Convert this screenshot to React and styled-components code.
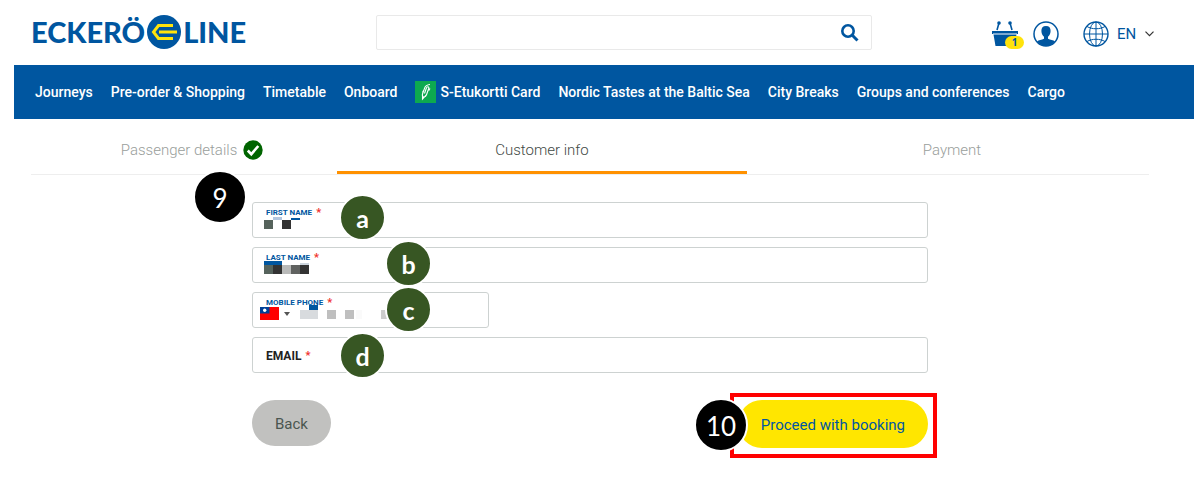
import React from "react";
import styled, { createGlobalStyle, css } from "styled-components";

const blue = "#0056a0";
const ui = `Roboto, sans-serif`;

const GlobalStyle = createGlobalStyle`
  * { box-sizing: border-box; }
  body { margin: 0; background: #fff; font-family: ${ui}; }
  button, input, select { font: inherit; }
`;

const Header = styled.header`
  display: flex;
  align-items: flex-start;
  padding: 15px 46px 15px 31px;
`;

const Logo = styled.a`
  flex: 0 0 345px;
  display: flex;
  align-items: center;
  gap: 2px;
  color: ${blue};
  font: 900 29px/34px Lato, sans-serif;
  text-decoration: none;
`;

const Search = styled.form`
  flex: 1;
  display: flex;
  align-items: center;
  height: 35px;
  padding-right: 12px;
  border: 1px solid #e9e9e9;
  border-radius: 2px;
`;

const SearchInput = styled.input`
  flex: 1;
  min-width: 0;
  height: 100%;
  border: 0;
  outline: 0;
  background: none;
`;

const IconButton = styled.button`
  position: relative;
  display: flex;
  padding: 0;
  border: 0;
  background: none;
  color: ${blue};
`;

const Tools = styled.div`
  flex: 0 0 282px;
  display: flex;
  align-items: center;
  justify-content: flex-end;
  gap: 9px;
  padding-top: 5px;
  color: ${blue};
`;

const Count = styled.span`
  position: absolute;
  left: 14px;
  bottom: -2px;
  width: 19px;
  border-radius: 7px;
  background: #ffe30b;
  color: ${blue};
  font: 700 10px/13px "Noto Sans", sans-serif;
  text-align: center;
`;

const Language = styled.label`
  display: flex;
  align-items: center;
  gap: 8px;
  margin-left: 15px;
`;

const LanguageSelect = styled.select`
  appearance: none;
  width: 20px;
  padding: 0;
  border: 0;
  background: none;
  color: ${blue};
  font-size: 15px;
  line-height: 28px;
`;

const Nav = styled.nav`
  display: flex;
  align-items: center;
  gap: 18px;
  min-height: 54px;
  margin: 0 6px 0 14px;
  padding: 0 21px;
  background: ${blue};
`;

const NavLink = styled.a`
  display: flex;
  align-items: center;
  gap: 4px;
  color: #fff;
  font-size: 14px;
  font-weight: 500;
  line-height: 22px;
  white-space: nowrap;
  text-decoration: none;
`;

const Main = styled.main`
  margin: 0 51px 0 31px;
`;

const Steps = styled.ol`
  display: grid;
  grid-template-columns: 306fr 410fr 402fr;
  margin: 0;
  padding: 0;
  list-style: none;
  border-bottom: 1px solid #eee;
`;

const Step = styled.li`
  display: flex;
  align-items: center;
  justify-content: center;
  gap: 6px;
  height: 55px;
  padding: 10px 0 0 ${(p) => p.$inset || 0}px;
  border-bottom: 3px solid ${(p) => (p.$current ? "#ff9100" : "transparent")};
  color: ${(p) => (p.$current ? "#3f4a45" : "#999e9b")};
  font-size: 15px;
  font-weight: 300;
  line-height: 24px;
`;

const Form = styled.form`
  position: relative;
  max-width: 676px;
  margin: 27px auto 0;
  padding-bottom: 43px;
`;

const Fields = styled.div`
  display: grid;
  gap: 9px;
`;

const Field = styled.div`
  position: relative;
  height: 36px;
  width: ${(p) => (p.$short ? "237px" : "100%")};
`;

const FieldInput = styled.input`
  width: 100%;
  height: 100%;
  padding: 12px 13px 0;
  border: 1px solid #cdd2d1;
  border-radius: 3px;
  outline: 0;
`;

const FieldLabel = styled.label`
  position: absolute;
  left: 14px;
  display: flex;
  gap: 4px;
  font-family: Roboto, sans-serif;
  font-weight: 700;
  ${(p) =>
    p.$large
      ? css`top: 10px; color: #222; font-size: 12px; line-height: 18px;`
      : css`top: 4px; color: ${blue}; font-size: 8px; line-height: 13px;`}
`;

const Required = styled.span`
  color: #f0312b;
  font-size: 11px;
`;

const Redaction = styled.svg`
  position: absolute;
  left: 12px;
  top: 13px;
`;

const Country = styled.button`
  position: absolute;
  left: 8px;
  top: 15px;
  display: flex;
  align-items: center;
  gap: 5px;
  padding: 0;
  border: 0;
  background: none;
`;

const Actions = styled.div`
  display: flex;
  justify-content: space-between;
  align-items: flex-start;
  margin-top: 27px;
`;

const Pill = styled.button`
  height: ${(p) => (p.$primary ? 48 : 46)}px;
  padding: 2px 23px 0;
  border: 0;
  border-radius: 24px;
  background: ${(p) => (p.$primary ? "#ffe600" : "#c1c1bf")};
  color: ${(p) => (p.$primary ? blue : "#4a5650")};
  font-size: 15px;
`;

const Highlight = styled.div`
  margin: -7px -9px -10px 0;
  padding: 3px 5px 6px 4px;
  border: 4px solid #f00;
`;

const Callout = styled.span`
  position: absolute;
  left: ${(p) => p.$x}px;
  top: ${(p) => p.$y}px;
  width: ${(p) => (p.$step ? 54 : 47)}px;
  height: ${(p) => (p.$step ? 54 : 47)}px;
  border: 2px solid #fff;
  border-radius: 50%;
  background: ${(p) => (p.$step ? "#000" : "#375623")};
  color: #fff;
  font: ${(p) => (p.$step ? "400 26px/52px" : "700 25px/44px")} Lato, sans-serif;
  text-align: center;
`;

const links = [
  "Journeys",
  "Pre-order & Shopping",
  "Timetable",
  "Onboard",
  "S-Etukortti Card",
  "Nordic Tastes at the Baltic Sea",
  "City Breaks",
  "Groups and conferences",
  "Cargo",
];

const Emblem = () => (
  <svg width="34" height="34" viewBox="0 0 34 34" aria-hidden="true">
    <circle cx="17" cy="17" r="17" fill={blue} />
    <path d="M26 10.500H11.500L6.500 17l5 6.500H26" fill="none" stroke="#ffe30b" strokeWidth="3" />
    <path d="M12 17h18" stroke="#ffe30b" strokeWidth="3" />
  </svg>
);

const SearchIcon = () => (
  <svg width="18" height="18" viewBox="0 0 18 18" fill="none" stroke={blue} aria-hidden="true">
    <circle cx="7" cy="7" r="5.700" strokeWidth="2.600" />
    <path d="M11.300 11.300l5.200 5.200" strokeWidth="3" />
  </svg>
);

const BasketIcon = () => (
  <svg width="33" height="26" viewBox="0 0 33 26" aria-hidden="true">
    <path d="M1 10h26v3H1zM2.500 13.500h23l-2 11.500H4.500z" fill={blue} />
    <path d="M2 12.500h24" stroke="#7ba7d0" />
    <path d="M6 9l2-7M21 9l-2-7" stroke={blue} strokeWidth="1.600" />
    <circle cx="8" cy="2" r="1.800" fill={blue} />
    <circle cx="19" cy="2" r="1.800" fill={blue} />
  </svg>
);

const ProfileIcon = () => (
  <svg width="26" height="26" viewBox="0 0 26 26" aria-hidden="true">
    <circle cx="13" cy="13" r="12" fill="#fff" stroke={blue} strokeWidth="1.500" />
    <path
      d="M13 5c-3.200 0-4.700 2-4.600 4.900.1 2.800 1.200 4.700 2.600 5.900v2c-2.200 1.300-5.400 1.300-7 2.700C6.200 23.400 9.300 25 13 25s6.800-1.600 9-4.500c-1.600-1.400-4.800-1.400-7-2.700v-2c1.400-1.200 2.500-3.100 2.600-5.900C17.700 7 16.200 5 13 5z"
      fill={blue}
    />
  </svg>
);

const GlobeIcon = () => (
  <svg width="26" height="26" viewBox="0 0 26 26" fill="none" stroke={blue} aria-hidden="true">
    <circle cx="13" cy="13" r="12" strokeWidth="1.400" />
    <ellipse cx="13" cy="13" rx="6.500" ry="12" />
    <path d="M13 1v24M1 13h24M4 5.500c5 3 13 3 18 0M4 20.500c5-3 13-3 18 0" />
  </svg>
);

const CardIcon = () => (
  <svg width="21" height="22" viewBox="0 0 21 22" fill="none" aria-hidden="true">
    <path d="M0 0h21v22H0z" fill="#0da94f" />
    <path
      d="M15 3.500c-3.200.3-4.700 1.500-5.300 3.300L7.500 13c-.6 2 .3 3.200 1.700 3 1.300-.2 1.900-1.200 2.300-2.300l2.200-6.200c.3-.9 0-1.700-.8-1.700-.9 0-1.300.6-1.600 1.400L9.500 12.500M7.500 13v5l4-4.300M13.800 9.500l1.200-2M8.500 9.500l-1 2"
      stroke="#fff"
      strokeWidth="1.100"
    />
  </svg>
);

const CheckIcon = () => (
  <svg width="20" height="20" viewBox="0 0 20 20" fill="none" aria-hidden="true">
    <circle cx="10" cy="10" r="9.700" fill="#006400" />
    <path d="M4.800 10.500l3.500 3.700 7-8.200" stroke="#fff" strokeWidth="2.600" />
  </svg>
);

const Flag = () => (
  <svg width="19" height="13" viewBox="0 0 19 13" aria-hidden="true">
    <path d="M0 0h19v13H0z" fill="#f00" />
    <path d="M0 0h9.500v6.500H0z" fill="#004098" />
    <circle cx="4.700" cy="3.200" r="1.700" fill="#fff" />
  </svg>
);

const Blocks = ({ cells }) => (
  <Redaction width="130" height="16" viewBox="0 0 130 16" aria-hidden="true">
    {cells.map(([x, y, w, h, fill]) => (
      <rect key={`${x}-${y}`} x={x} y={y} width={w} height={h} fill={fill} />
    ))}
  </Redaction>
);

const firstName = [
  [9, 2, 9, 3, "#b3c7df"],
  [27, 3, 9, 2, "#0056a0"],
  [0, 5, 9, 9, "#56635c"],
  [18, 5, 9, 9, "#333"],
];
const lastName = [
  [0, 1, 18, 4, "#0056a0"],
  [36, 3, 9, 2, "#ccd5de"],
  [0, 5, 9, 9, "#56635c"],
  [9, 5, 9, 9, "#333"],
  [18, 5, 9, 9, "#b9bab9"],
  [27, 5, 9, 9, "#606260"],
  [36, 5, 9, 9, "#333"],
];
const phone = [
  [45, 0, 9, 5, "#0056a0"],
  [36, 5, 18, 9, "#d8dbde"],
  [63, 5, 9, 9, "#bfbfbf"],
  [81, 5, 9, 9, "#bfbfbf"],
  [92, 5, 6, 9, "#fafafa"],
  [117, 5, 9, 9, "#ccc"],
];

const TextField = ({ id, label, type = "text", large, short, cells, children }) => (
  <Field $short={short}>
    <FieldInput id={id} type={type} required />
    <FieldLabel htmlFor={id} $large={large}>
      {label} <Required>*</Required>
    </FieldLabel>
    {cells && <Blocks cells={cells} />}
    {children}
  </Field>
);

export default function App() {
  return (
    <>
      <GlobalStyle />
      <Header>
        <Logo href="#" aria-label="Eckerö Line">
          <span>ECKERÖ</span>
          <Emblem />
          <span>LINE</span>
        </Logo>
        <Search role="search">
          <SearchInput type="search" aria-label="Search" />
          <IconButton type="button" aria-label="Search">
            <SearchIcon />
          </IconButton>
        </Search>
        <Tools>
          <IconButton type="button" aria-label="Basket">
            <BasketIcon />
            <Count>1</Count>
          </IconButton>
          <IconButton type="button" aria-label="Profile">
            <ProfileIcon />
          </IconButton>
          <Language>
            <GlobeIcon />
            <LanguageSelect aria-label="Language" defaultValue="EN">
              <option>EN</option>
            </LanguageSelect>
            <svg width="9" height="6" viewBox="0 0 9 6" fill="none" stroke="#333" aria-hidden="true">
              <path d="M.5.700l4 4 4-4" strokeWidth="1.200" />
            </svg>
          </Language>
        </Tools>
      </Header>
      <Nav>
        {links.map((text) => (
          <NavLink href="#" key={text}>
            {text === "S-Etukortti Card" && <CardIcon />}
            {text}
          </NavLink>
        ))}
      </Nav>
      <Main>
        <Steps>
          <Step $inset={16}>
            Passenger details <CheckIcon />
          </Step>
          <Step $current aria-current="step">Customer info</Step>
          <Step $inset={8}>Payment</Step>
        </Steps>
        <Form>
          <Fields>
            <TextField id="first" label="FIRST NAME" cells={firstName} />
            <TextField id="last" label="LAST NAME" cells={lastName} />
            <TextField id="phone" label="MOBILE PHONE" type="tel" short cells={phone}>
              <Country type="button" aria-label="Country code">
                <Flag />
                <svg width="6" height="4" viewBox="0 0 6 4" aria-hidden="true">
                  <path d="M0 0h6L3 4z" fill="#555" />
                </svg>
              </Country>
            </TextField>
            <TextField id="email" label="EMAIL" type="email" large />
          </Fields>
          <Actions>
            <Pill type="button">Back</Pill>
            <Highlight>
              <Pill type="submit" $primary>Proceed with booking</Pill>
            </Highlight>
          </Actions>
          <Callout $step $x={-59} $y={-32}>9</Callout>
          <Callout $x={87} $y={-8}>a</Callout>
          <Callout $x={133} $y={38}>b</Callout>
          <Callout $x={133} $y={84}>c</Callout>
          <Callout $x={87} $y={130}>d</Callout>
          <Callout $step $x={442} $y={196}>10</Callout>
        </Form>
      </Main>
    </>
  );
}
